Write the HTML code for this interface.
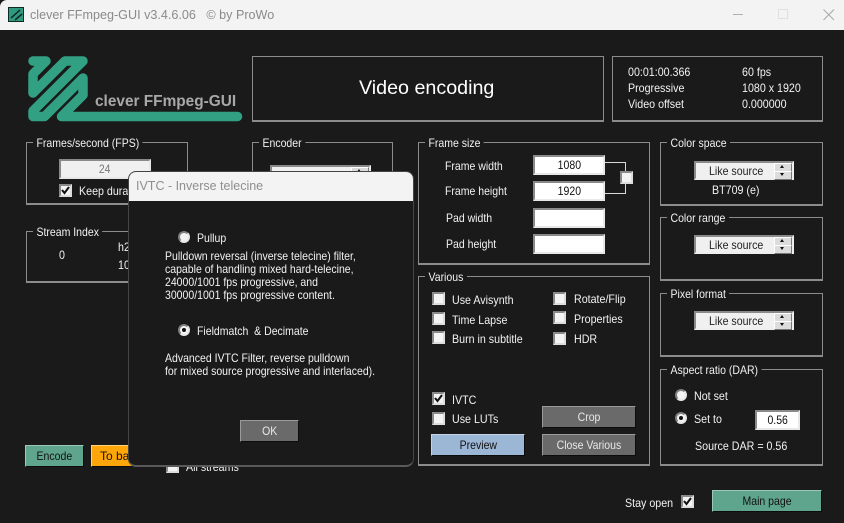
<!DOCTYPE html>
<html><head><meta charset="utf-8"><style>
html,body{margin:0;padding:0}
body{width:844px;height:523px;overflow:hidden;background:#1a1a1a;position:relative;font-family:"Liberation Sans",sans-serif;font-size:12px;color:#f2f2f2}
div,span{box-sizing:border-box}
.a,.t,.g,.i,.b,.c,.r,.s{position:absolute}
.t{white-space:pre;line-height:14px;height:14px;transform:scaleX(.89);transform-origin:0 0}
.t.n{transform:none}
.t.d{transform:scaleX(.875)}
.g{border:1px solid #8c8c8c;border-bottom:2px solid #8c8c8c;}
.g>span{position:absolute;left:6px;top:-7px;background:#1a1a1a;padding:0 4px;line-height:14px;white-space:pre;transform:scaleX(.875);transform-origin:0 0}
.i{background:#fff;border:2px solid;border-color:#8a8a8a #e8e8e8 #e8e8e8 #8a8a8a;color:#111;text-align:center;line-height:16px}
.i span,.b span{display:inline-block;transform:scaleX(.875);white-space:pre}
.b{background:#6a6a6a;border:1px solid;border-color:#9a9a9a #0c0c0c #0c0c0c #9a9a9a;text-align:center;color:#e8e8e8;line-height:21px}
.c{width:13px;height:13px;background:#f4f4f4;border:2px solid;border-color:#8a8a8a #ddd #ddd #8a8a8a}
.c svg{position:absolute;left:0;top:0}
.r{width:12px;height:12px;border-radius:50%;background:#f4f4f4;border:2px solid;border-color:#808080 #e8e8e8 #e8e8e8 #808080}
.r.on::after{content:"";position:absolute;left:2px;top:2px;width:4px;height:4px;background:#111;border-radius:50%}
.s{width:100px;background:#f0f0f0;border:2px solid;border-color:#8a8a8a #eee #eee #8a8a8a;color:#222;line-height:17px;padding-left:13px}
.s b{font-weight:400;display:inline-block;transform:scaleX(.885);transform-origin:0 0;white-space:pre}
.s i{position:absolute;right:0;width:16px;height:7px;background:#dcdcdc;border:1px solid;border-color:#fff #777 #777 #fff}
.s i::after{content:"";position:absolute;left:5px;top:1px;border-left:2px solid transparent;border-right:2px solid transparent}
.s i.u{top:0}.s i.u::after{border-bottom:3px solid #111}
.s i.d{top:8px}.s i.d::after{border-top:3px solid #111}
</style></head><body>

<!-- title bar -->
<div class="a" style="left:0;top:0;width:844px;height:30px;background:#f3f3f3;border-top-left-radius:7px"></div>
<div class="a" style="left:8px;top:7px;width:16px;height:15px;background:#2f9a7f;border:1px solid #0d2a24"></div>
<svg class="a" style="left:8px;top:7px" width="16" height="15"><path d="M3 11 L12 3 M7 13 L14 7" stroke="#10231f" stroke-width="1.5" fill="none"/></svg>
<div class="t n" style="left:30px;top:8px;color:#8a8a8a;font-size:12.6px">clever FFmpeg-GUI v3.4.6.06   © by ProWo</div>
<svg class="a" style="left:730px;top:6px" width="110" height="20" fill="none" stroke-width="1"><path d="M3 8.500H13" stroke="#b0b0b0"/><path d="M48.500 3.500H57.500V12.500H48.500Z" stroke="#e0e0e0"/><path d="M93.500 3.500L104 14M104 3.500L93.500 14" stroke="#a8a8a8"/></svg>

<!-- logo -->
<svg class="a" style="left:0;top:0" width="250" height="130">
<path d="M33 61H46L33 74V93L65 61H83L33 111V116.500H44.500L83 78V95L61.500 116.500H237.500" fill="none" stroke="#32a083" stroke-width="9.500" stroke-linejoin="round" stroke-linecap="round"/>
<text x="95" y="106" font-family="Liberation Sans" font-weight="700" font-size="15.4" fill="#a8a8a8">clever FFmpeg-GUI</text>
</svg>

<!-- header boxes -->
<div class="g" style="left:252px;top:56px;width:352px;height:66px"></div>
<div class="t n" style="left:359px;top:76px;font-size:19.7px;height:24px;line-height:24px;color:#fff">Video encoding</div>
<div class="g" style="left:612px;top:56px;width:211px;height:66px"></div>
<div class="t" style="left:628px;top:65px">00:01:00.366</div>
<div class="t" style="left:742px;top:65px">60 fps</div>
<div class="t" style="left:628px;top:81px">Progressive</div>
<div class="t" style="left:742px;top:81px">1080 x 1920</div>
<div class="t" style="left:628px;top:97px">Video offset</div>
<div class="t" style="left:742px;top:97px">0.000000</div>

<!-- FPS -->
<div class="g" style="left:26px;top:142px;width:162px;height:63px"><span>Frames/second (FPS)</span></div>
<div class="i" style="left:59px;top:159px;width:92px;height:20px;background:#f0f0f0;color:#777"><span>24</span></div>
<div class="c" style="left:59px;top:184px"><svg width="9" height="9"><path d="M1 4L3.500 7L8 1" stroke="#111" stroke-width="2" fill="none"/></svg></div>
<div class="t" style="left:79px;top:184px">Keep duration</div>

<!-- Encoder -->
<div class="g" style="left:252px;top:142px;width:141px;height:300px"><span>Encoder</span></div>
<div class="s" style="left:270px;top:165px;height:20px;width:101px"><i class="u"></i></div>

<!-- Stream index -->
<div class="g" style="left:26px;top:231px;width:200px;height:52px"><span>Stream Index</span></div>
<div class="t" style="left:59px;top:248px">0</div>
<div class="t" style="left:118px;top:240px">h264</div>
<div class="t" style="left:118px;top:258px">1080</div>

<!-- Frame size -->
<div class="g" style="left:418px;top:142px;width:232px;height:123px"><span>Frame size</span></div>
<div class="t d" style="left:445px;top:159px">Frame width</div>
<div class="t d" style="left:445px;top:184px">Frame height</div>
<div class="t d" style="left:446px;top:211px">Pad width</div>
<div class="t d" style="left:446px;top:237px">Pad height</div>
<div class="i" style="left:533px;top:155px;width:72px;height:20px"><span>1080</span></div>
<div class="i" style="left:533px;top:181px;width:72px;height:20px"><span>1920</span></div>
<div class="i" style="left:533px;top:208px;width:72px;height:20px"></div>
<div class="i" style="left:533px;top:234px;width:72px;height:20px"></div>
<svg class="a" style="left:605px;top:160px" width="24" height="36" fill="none" stroke="#d8d8d8"><path d="M0 2.500H20.500V12M20.500 24V33.500H0"/></svg>
<div class="c" style="left:620px;top:171px"></div>

<!-- Various -->
<div class="g" style="left:418px;top:276px;width:232px;height:190px"><span>Various</span></div>
<div class="c" style="left:432px;top:292px"></div><div class="t" style="left:452px;top:293px">Use Avisynth</div>
<div class="c" style="left:432px;top:312px"></div><div class="t" style="left:452px;top:313px">Time Lapse</div>
<div class="c" style="left:432px;top:331px"></div><div class="t" style="left:452px;top:332px">Burn in subtitle</div>
<div class="c" style="left:553px;top:292px"></div><div class="t" style="left:574px;top:292px">Rotate/Flip</div>
<div class="c" style="left:553px;top:311px"></div><div class="t" style="left:574px;top:312px">Properties</div>
<div class="c" style="left:553px;top:332px"></div><div class="t" style="left:574px;top:332px">HDR</div>
<div class="c" style="left:432px;top:392px"><svg width="9" height="9"><path d="M1 4L3.500 7L8 1" stroke="#111" stroke-width="2" fill="none"/></svg></div><div class="t" style="left:452px;top:393px">IVTC</div>
<div class="c" style="left:432px;top:412px"></div><div class="t" style="left:452px;top:412px">Use LUTs</div>
<div class="b" style="left:542px;top:406px;width:94px;height:22px"><span>Crop</span></div>
<div class="b" style="left:542px;top:434px;width:94px;height:22px"><span>Close Various</span></div>
<div class="b" style="left:431px;top:434px;width:94px;height:22px;background:#9cb6d6;color:#111;border-color:#c4d4e6 #0c0c0c #0c0c0c #c4d4e6"><span>Preview</span></div>

<!-- Right column -->
<div class="g" style="left:660px;top:142px;width:163px;height:64px"><span>Color space</span></div>
<div class="s" style="left:694px;top:161px;height:19px"><i class="u"></i><i class="d"></i><b>Like source</b></div>
<div class="t" style="left:712px;top:183px">BT709 (e)</div>
<div class="g" style="left:660px;top:217px;width:163px;height:64px"><span>Color range</span></div>
<div class="s" style="left:694px;top:235px;height:19px"><i class="u"></i><i class="d"></i><b>Like source</b></div>
<div class="g" style="left:660px;top:293px;width:163px;height:64px"><span>Pixel format</span></div>
<div class="s" style="left:694px;top:311px;height:19px"><i class="u"></i><i class="d"></i><b>Like source</b></div>
<div class="g" style="left:660px;top:369px;width:163px;height:97px"><span>Aspect ratio (DAR)</span></div>
<div class="r" style="left:675px;top:389px"></div><div class="t" style="left:694px;top:389px">Not set</div>
<div class="r on" style="left:675px;top:412px"></div><div class="t" style="left:694px;top:412px">Set to</div>
<div class="i" style="left:755px;top:410px;width:45px;height:20px"><span>0.56</span></div>
<div class="t" style="left:695px;top:439px">Source DAR = 0.56</div>

<!-- bottom -->
<div class="t" style="left:625px;top:496px">Stay open</div>
<div class="c" style="left:681px;top:495px"><svg width="9" height="9"><path d="M1 4L3.500 7L8 1" stroke="#111" stroke-width="2" fill="none"/></svg></div>
<div class="b" style="left:712px;top:490px;width:110px;height:22px;background:#5fa58d;color:#111;border-color:#9cc8b8 #0c0c0c #0c0c0c #9cc8b8"><span>Main page</span></div>
<div class="b" style="left:25px;top:445px;width:59px;height:22px;background:#5fa58d;color:#111;border-color:#9cc8b8 #0c0c0c #0c0c0c #9cc8b8"><span>Encode</span></div>
<div class="b" style="left:91px;top:445px;width:60px;height:22px;background:#ffa70a;color:#111;border-color:#ffd27a #0c0c0c #0c0c0c #ffd27a;text-align:left;padding-left:8px"><span style="transform:none">To back</span></div>
<div class="c" style="left:166px;top:460px"></div>
<div class="t" style="left:186px;top:460px">All streams</div>

<!-- Dialog -->
<div class="a" style="left:128px;top:171px;width:286px;height:296px;background:#1a1a1a;border:1px solid #444;border-bottom:2px solid #5a5a5a;border-radius:8px;overflow:hidden">
<div class="a" style="left:0;top:0;width:284px;height:29px;background:#f3f3f3"></div>
<div class="t n" style="left:7px;top:7px;color:#8f8f8f;font-size:12.5px">IVTC - Inverse telecine</div>
</div>
<div class="r" style="left:178px;top:231px"></div><div class="t d" style="left:197px;top:231px">Pullup</div>
<div class="t d" style="left:165px;top:249px">Pulldown reversal (inverse telecine) filter,</div>
<div class="t d" style="left:165px;top:262px">capable of handling mixed hard-telecine,</div>
<div class="t d" style="left:165px;top:275px">24000/1001 fps progressive, and</div>
<div class="t d" style="left:165px;top:288px">30000/1001 fps progressive content.</div>
<div class="r on" style="left:178px;top:324px"></div><div class="t d" style="left:197px;top:324px">Fieldmatch  &amp; Decimate</div>
<div class="t d" style="left:165px;top:351px">Advanced IVTC Filter, reverse pulldown</div>
<div class="t d" style="left:165px;top:364px">for mixed source progressive and interlaced).</div>
<div class="b" style="left:240px;top:420px;width:59px;height:22px"><span>OK</span></div>

</body></html>
